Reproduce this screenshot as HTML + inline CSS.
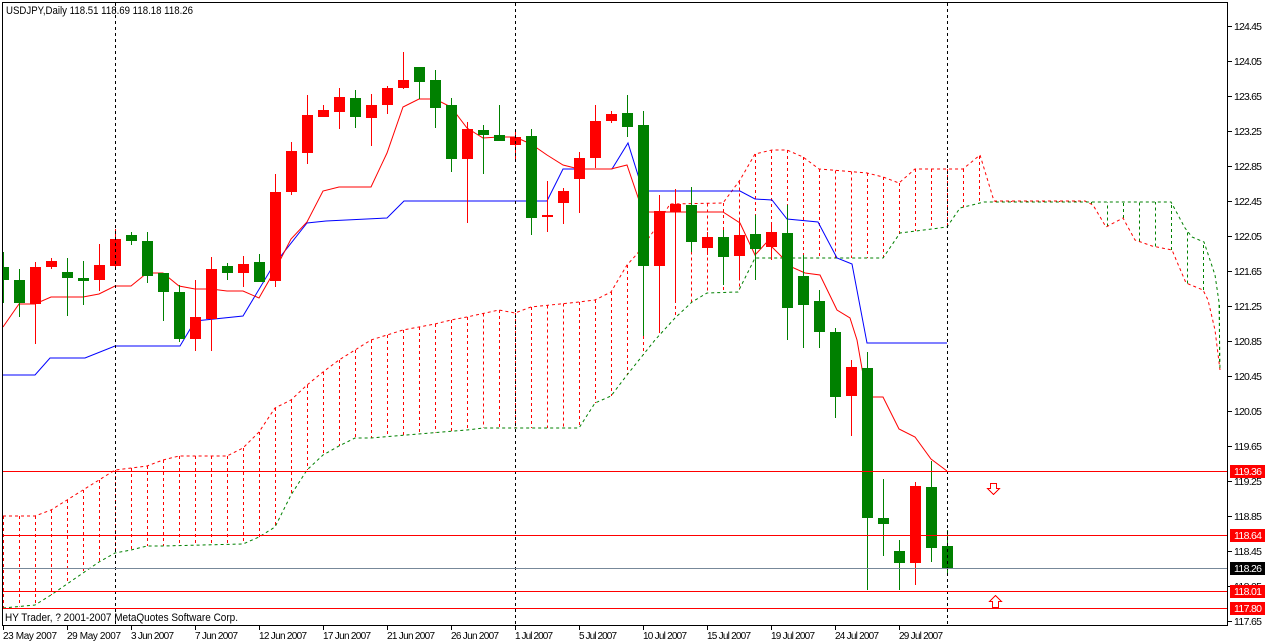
<!DOCTYPE html>
<html><head><meta charset="utf-8"><style>
html,body{margin:0;padding:0;background:#fff;width:1266px;height:643px;overflow:hidden}
svg{display:block}
text{font-family:"Liberation Sans",sans-serif;font-size:11px;fill:#000}
.d{font-size:10px}
.p{font-size:10.5px}
</style></head><body>
<svg id="s" width="1266" height="643" viewBox="0 0 1266 643" xmlns="http://www.w3.org/2000/svg" shape-rendering="crispEdges">
<defs><clipPath id="c"><rect x="3" y="3" width="1225" height="622"/></clipPath></defs>
<g id="hatch" clip-path="url(#c)"></g>
<g id="lines" clip-path="url(#c)" shape-rendering="auto"></g>
<g id="candles" clip-path="url(#c)"></g>
<g id="vsep" stroke="#000" stroke-dasharray="3,3">
<line x1="115.5" y1="3" x2="115.5" y2="625"/>
<line x1="515.5" y1="3" x2="515.5" y2="625"/>
<line x1="947.5" y1="3" x2="947.5" y2="625"/>
</g>
<g stroke-width="1">
<line x1="3" y1="471.5" x2="1228" y2="471.5" stroke="#f00"/>
<line x1="3" y1="535.5" x2="1228" y2="535.5" stroke="#f00"/>
<line x1="3" y1="568.5" x2="1228" y2="568.5" stroke="#778899"/>
<line x1="3" y1="591.5" x2="1228" y2="591.5" stroke="#f00"/>
<line x1="3" y1="608.5" x2="1228" y2="608.5" stroke="#f00"/>
</g>
<polygon points="990.5,483.5 996.5,483.5 996.5,488.5 999.5,488.5 993.5,494.5 987.5,488.5 990.5,488.5" fill="none" stroke="#f00"/>
<polygon points="992.5,607.5 998.5,607.5 998.5,601.5 1001.5,601.5 995.5,595.5 989.5,601.5 992.5,601.5" fill="none" stroke="#f00"/>
<rect x="2.5" y="2.5" width="1225" height="623" fill="none" stroke="#000"/>
<text x="6" y="14" textLength="187" lengthAdjust="spacingAndGlyphs">USDJPY,Daily  118.51 118.69 118.18 118.26</text>
<text x="5" y="621" textLength="233" lengthAdjust="spacingAndGlyphs">HY Trader, ? 2001-2007 MetaQuotes Software Corp.</text>
<g id="ticks" stroke="#000"></g>
<g class="p">
<text class="p" x="1234" y="30" textLength="28">124.45</text>
<text class="p" x="1234" y="65" textLength="28">124.05</text>
<text class="p" x="1234" y="100" textLength="28">123.65</text>
<text class="p" x="1234" y="135" textLength="28">123.25</text>
<text class="p" x="1234" y="170" textLength="28">122.85</text>
<text class="p" x="1234" y="205" textLength="28">122.45</text>
<text class="p" x="1234" y="240" textLength="28">122.05</text>
<text class="p" x="1234" y="275" textLength="28">121.65</text>
<text class="p" x="1234" y="310" textLength="28">121.25</text>
<text class="p" x="1234" y="345" textLength="28">120.85</text>
<text class="p" x="1234" y="380" textLength="28">120.45</text>
<text class="p" x="1234" y="415" textLength="28">120.05</text>
<text class="p" x="1234" y="450" textLength="28">119.65</text>
<text class="p" x="1234" y="485" textLength="28">119.25</text>
<text class="p" x="1234" y="520" textLength="28">118.85</text>
<text class="p" x="1234" y="555" textLength="28">118.45</text>
<text class="p" x="1234" y="590" textLength="28">118.05</text>
<text class="p" x="1234" y="625" textLength="28">117.65</text>
</g>
<rect x="1230" y="465" width="35" height="13" fill="#f00"/><text class="p" x="1234" y="475" textLength="28" style="fill:#fff">119.36</text>
<rect x="1230" y="529" width="35" height="13" fill="#f00"/><text class="p" x="1234" y="539" textLength="28" style="fill:#fff">118.64</text>
<rect x="1230" y="562" width="35" height="13" fill="#000"/><text class="p" x="1234" y="572" textLength="28" style="fill:#fff">118.26</text>
<rect x="1230" y="585" width="35" height="13" fill="#f00"/><text class="p" x="1234" y="595" textLength="28" style="fill:#fff">118.01</text>
<rect x="1230" y="602" width="35" height="13" fill="#f00"/><text class="p" x="1234" y="612" textLength="28" style="fill:#fff">117.80</text>
<g>
<text class="d" x="3" y="639" textLength="54">23 May 2007</text>
<text class="d" x="67" y="639" textLength="54">29 May 2007</text>
<text class="d" x="131" y="639" textLength="43">3 Jun 2007</text>
<text class="d" x="195" y="639" textLength="43">7 Jun 2007</text>
<text class="d" x="259" y="639" textLength="48">12 Jun 2007</text>
<text class="d" x="323" y="639" textLength="48">17 Jun 2007</text>
<text class="d" x="387" y="639" textLength="48">21 Jun 2007</text>
<text class="d" x="451" y="639" textLength="48">26 Jun 2007</text>
<text class="d" x="515" y="639" textLength="38">1 Jul 2007</text>
<text class="d" x="579" y="639" textLength="38">5 Jul 2007</text>
<text class="d" x="643" y="639" textLength="44">10 Jul 2007</text>
<text class="d" x="707" y="639" textLength="44">15 Jul 2007</text>
<text class="d" x="771" y="639" textLength="44">19 Jul 2007</text>
<text class="d" x="835" y="639" textLength="44">24 Jul 2007</text>
<text class="d" x="899" y="639" textLength="44">29 Jul 2007</text>
</g>
</svg>
<script>
(function(){
var NS="http://www.w3.org/2000/svg";
function el(p,t,a){var e=document.createElementNS(NS,t);for(var k in a)e.setAttribute(k,a[k]);document.getElementById(p).appendChild(e);return e;}
var A=[[3,516],[35,516],[51,510],[67,500],[83,490],[99,480],[115,470],[147,466],[163,460],[179,456],[227,456],[243,448],[259,432],[275,408],[291,400],[307,385],[323,372],[339,360],[355,350],[371,340],[387,335],[403,330],[435,324],[451,320],[467,317],[499,310],[515,313],[531,307],[579,302],[595,300],[611,292],[627,265],[637,254],[653,232],[670,204],[723,203],[740,180],[755,154],[772,150],[787,150],[803,157],[819,169],[867,173],[883,177],[899,183],[915,169],[963,169],[980,155],[994,201],[1085,201],[1093,205],[1106,227],[1123,218],[1135,240],[1152,246],[1172,250],[1186,283],[1203,290],[1208,300],[1215,330],[1220,370]];
var B=[[3,608],[35,605],[51,595],[99,562],[115,553],[131,550],[147,546],[163,546],[243,544],[259,537],[275,527],[291,495],[307,470],[323,455],[339,446],[355,438],[371,438],[467,430],[483,428],[579,428],[595,403],[611,396],[627,375],[655,340],[675,318],[692,302],[707,293],[738,292],[755,258],[883,258],[900,233],[947,227],[960,208],[984,202],[1171,202],[1185,228],[1192,237],[1204,242],[1215,275],[1219,302],[1220,370]];
var T=[[3,327],[19,304],[35,304],[51,297],[83,297],[99,294],[115,286],[131,286],[147,273],[163,273],[179,286],[195,289],[211,289],[227,291],[243,291],[259,298],[275,270],[291,239],[307,222],[323,191],[339,187],[371,187],[387,153],[403,107],[419,99],[435,99],[451,107],[467,128],[483,138],[499,137],[515,137],[531,144],[547,155],[563,165],[579,169],[611,169],[627,165],[643,212],[675,212],[723,212],[740,223],[755,255],[767,242],[782,257],[787,265],[805,273],[820,275],[837,310],[850,318],[857,340],[867,397],[883,397],[899,429],[915,437],[931,459],[947,471]];
var K=[[3,375],[35,375],[50,358],[85,358],[115,346],[180,346],[195,321],[243,316],[273,266],[307,223],[326,221],[387,218],[404,201],[547,201],[563,169],[612,169],[628,143],[643,191],[740,191],[755,199],[772,200],[787,219],[818,222],[837,258],[852,264],[867,343],[947,343]];
function yAt(P,x){for(var i=0;i<P.length-1;i++){if(x>=P[i][0]&&x<=P[i+1][0]){var t=(P[i+1][0]==P[i][0])?0:(x-P[i][0])/(P[i+1][0]-P[i][0]);return P[i][1]+t*(P[i+1][1]-P[i][1]);}}return null;}
function pts(P){return P.map(function(p){return p[0]+","+p[1];}).join(" ");}
for(var x=3;x<=1220;x+=16){var a=yAt(A,x),b=yAt(B,x);if(a==null||b==null)continue;
el("hatch","line",{x1:x+0.5,x2:x+0.5,y1:a,y2:b,stroke:(a<=b?"#f00":"#008000"),"stroke-dasharray":"3,3"});}
el("lines","polyline",{points:pts(A),fill:"none",stroke:"#f00","stroke-dasharray":"3,3"});
el("lines","polyline",{points:pts(B),fill:"none",stroke:"#008000","stroke-dasharray":"3,3"});
el("lines","polyline",{points:pts(K),fill:"none",stroke:"#00f"});
el("lines","polyline",{points:pts(T),fill:"none",stroke:"#f00"});
var C=[[267,280,252,303,'g'],[280,303,269,317,'g'],[267,304,262,344,'r'],[261,267,258,269,'r'],[272,278,258,316,'g'],[278,281,261,305,'g'],[265,280,244,291,'r'],[239,266,229,270,'r'],[235,241,232,245,'g'],[241,276,232,283,'g'],[273,292,273,321,'g'],[292,339,285,342,'g'],[317,339,280,351,'r'],[269,319,257,351,'r'],[266,273,263,280,'g'],[264,273,256,287,'r'],[262,282,254,282,'g'],[192,281,174,287,'r'],[151,192,142,195,'r'],[115,153,95,164,'r'],[110,117,105,117,'r'],[97,112,88,129,'r'],[98,117,90,128,'g'],[105,118,94,146,'r'],[88,105,86,114,'r'],[80,88,52,89,'r'],[67,82,67,99,'g'],[80,108,70,128,'g'],[105,159,98,172,'g'],[129,159,122,223,'r'],[130,135,125,174,'g'],[135,141,105,141,'g'],[137,145,132,161,'r'],[136,218,129,235,'g'],[215,217,181,232,'r'],[191,203,188,224,'r'],[158,179,152,213,'r'],[121,158,105,168,'r'],[114,121,111,123,'r'],[113,127,95,137,'g'],[125,266,111,336,'g'],[211,266,195,330,'r'],[204,212,189,300,'r'],[205,242,187,252,'g'],[237,248,232,255,'r'],[237,257,230,285,'g'],[235,256,220,280,'r'],[234,249,215,280,'g'],[232,247,223,260,'r'],[233,308,205,340,'g'],[276,305,255,348,'g'],[301,332,290,348,'g'],[332,397,328,418,'g'],[367,396,360,436,'r'],[368,518,352,590,'g'],[518,524,479,556,'g'],[551,563,540,590,'g'],[486,563,482,585,'r'],[487,548,461,562,'g'],[546,569,530,576,'g']];
for(var k=0;k<C.length;k++){var c=C[k],cx=3+16*k,col=c[4]=='g'?"#008000":"#f00";
el("candles","rect",{x:cx,y:c[2],width:1,height:c[3]-c[2],fill:col});
el("candles","rect",{x:cx-5,y:c[0],width:11,height:Math.max(1,c[1]-c[0]),fill:col});}
var tp=[26,61,96,131,166,201,236,271,306,341,376,411,446,481,516,551,586,621];
tp.forEach(function(y){el("ticks","line",{x1:1228,x2:1232,y1:y+0.5,y2:y+0.5});});
for(var i=0;i<15;i++){var x=3+64*i+0.5;el("ticks","line",{x1:x,x2:x,y1:626,y2:630});}
})();
</script>
</body></html>
